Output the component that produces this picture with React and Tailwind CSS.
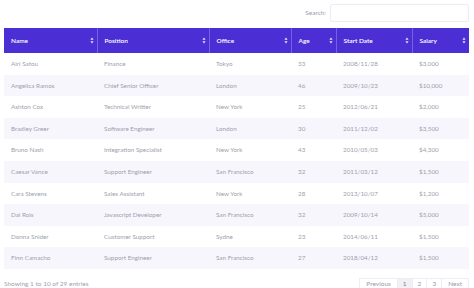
import React from 'react';

const columns = [
  { key: 'name', label: 'Name', width: 'w-[93px]' },
  { key: 'position', label: 'Position', width: 'w-[112px]' },
  { key: 'office', label: 'Office', width: 'w-[82px]' },
  { key: 'age', label: 'Age', width: 'w-[45px]' },
  { key: 'start', label: 'Start Date', width: 'w-[76px]' },
  { key: 'salary', label: 'Salary', width: 'w-[57px]' },
];

const rows = [
  ['Airi Satou', 'Finance', 'Tokyo', '33', '2008/11/28', '$3,000'],
  ['Angelica Ramos', 'Chief Senior Officer', 'London', '46', '2009/10/23', '$10,000'],
  ['Ashton Cox', 'Technical Writter', 'New York', '25', '2012/06/21', '$2,000'],
  ['Bradley Greer', 'Software Engineer', 'London', '30', '2011/12/02', '$3,500'],
  ['Bruno Nash', 'Integration Specialist', 'New York', '43', '2010/05/03', '$4,300'],
  ['Caesar Vance', 'Support Engineer', 'San Francisco', '32', '2011/03/12', '$1,500'],
  ['Cara Stevens', 'Sales Assistant', 'New York', '28', '2013/10/07', '$1,200'],
  ['Dai Rois', 'Javascript Developer', 'San Francisco', '32', '2009/10/14', '$5,000'],
  ['Donna Snider', 'Customer Support', 'Sydne', '23', '2014/06/11', '$1,500'],
  ['Finn Camacho', 'Support Engineer', 'San Francisco', '27', '2018/04/12', '$1,500'],
];

const SortIcon = () => (
  <svg width="4" height="7" viewBox="0 0 4 7" className="shrink-0">
    <path d="M2 0.5 L3.6 2.8 L0.4 2.8 Z" fill="#ffffff" fillOpacity="0.85" />
    <path d="M2 6.5 L3.6 4.2 L0.4 4.2 Z" fill="#ffffff" fillOpacity="0.85" />
  </svg>
);

const App = () => {
  return (
    <div className="w-[474px] h-[288px] overflow-hidden bg-white px-[4px] font-['Lato',sans-serif] text-[#9d9fae]">
      {/* search */}
      <div className="flex items-center justify-end gap-[4px] h-[25px] pt-[1px]">
        <span className="text-[6.5px] text-[#9a9aa8]">Search:</span>
        <div className="w-[139px] h-[18px] border border-[#ececf2] rounded-[2px] mr-[1px]" />
      </div>

      <table className="table-fixed border-collapse w-[465px] mt-[3px]">
        <colgroup>
          {columns.map(c => <col key={c.key} className={c.width} />)}
        </colgroup>
        <thead>
          <tr className="bg-[#4b2fd5] h-[25px]">
            {columns.map((c, i) => (
              <th key={c.key}
                className={`p-0 text-left font-semibold text-white text-[6.5px] ${i > 0 ? 'border-l border-[#7561e2]' : ''}`}>
                <div className="flex items-center justify-between pl-[7px] pr-[3px]">
                  <span>{c.label}</span>
                  <SortIcon />
                </div>
              </th>
            ))}
          </tr>
        </thead>
        <tbody>
          {rows.map((r, i) => (
            <tr key={r[0]} className={`h-[21.6px] ${i % 2 === 1 ? 'bg-[#f7f6fd]' : 'bg-white'}`}>
              {r.map((cell, j) => (
                <td key={j} className="p-0 pl-[7px] text-[6.3px] whitespace-nowrap overflow-hidden">{cell}</td>
              ))}
            </tr>
          ))}
        </tbody>
      </table>

      {/* footer */}
      <div className="flex items-center justify-between mt-[9px]">
        <span className="text-[6.5px] text-[#a2a2b0]">Showing 1 to 10 of 29 entries</span>
        <div className="flex items-stretch h-[12px] text-[6.5px] text-[#9a9aa8] mr-[1px]">
          <span className="flex items-center px-[6px] border border-[#ededf3]">Previous</span>
          <span className="flex items-center px-[5px] border border-l-0 border-[#ededf3] bg-[#f1f1f5] text-[#7c7c8c]">1</span>
          <span className="flex items-center px-[5px] border border-l-0 border-[#ededf3]">2</span>
          <span className="flex items-center px-[5px] border border-l-0 border-[#ededf3]">3</span>
          <span className="flex items-center px-[6px] border border-l-0 border-[#ededf3]">Next</span>
        </div>
      </div>
    </div>
  );
};

export default App;
